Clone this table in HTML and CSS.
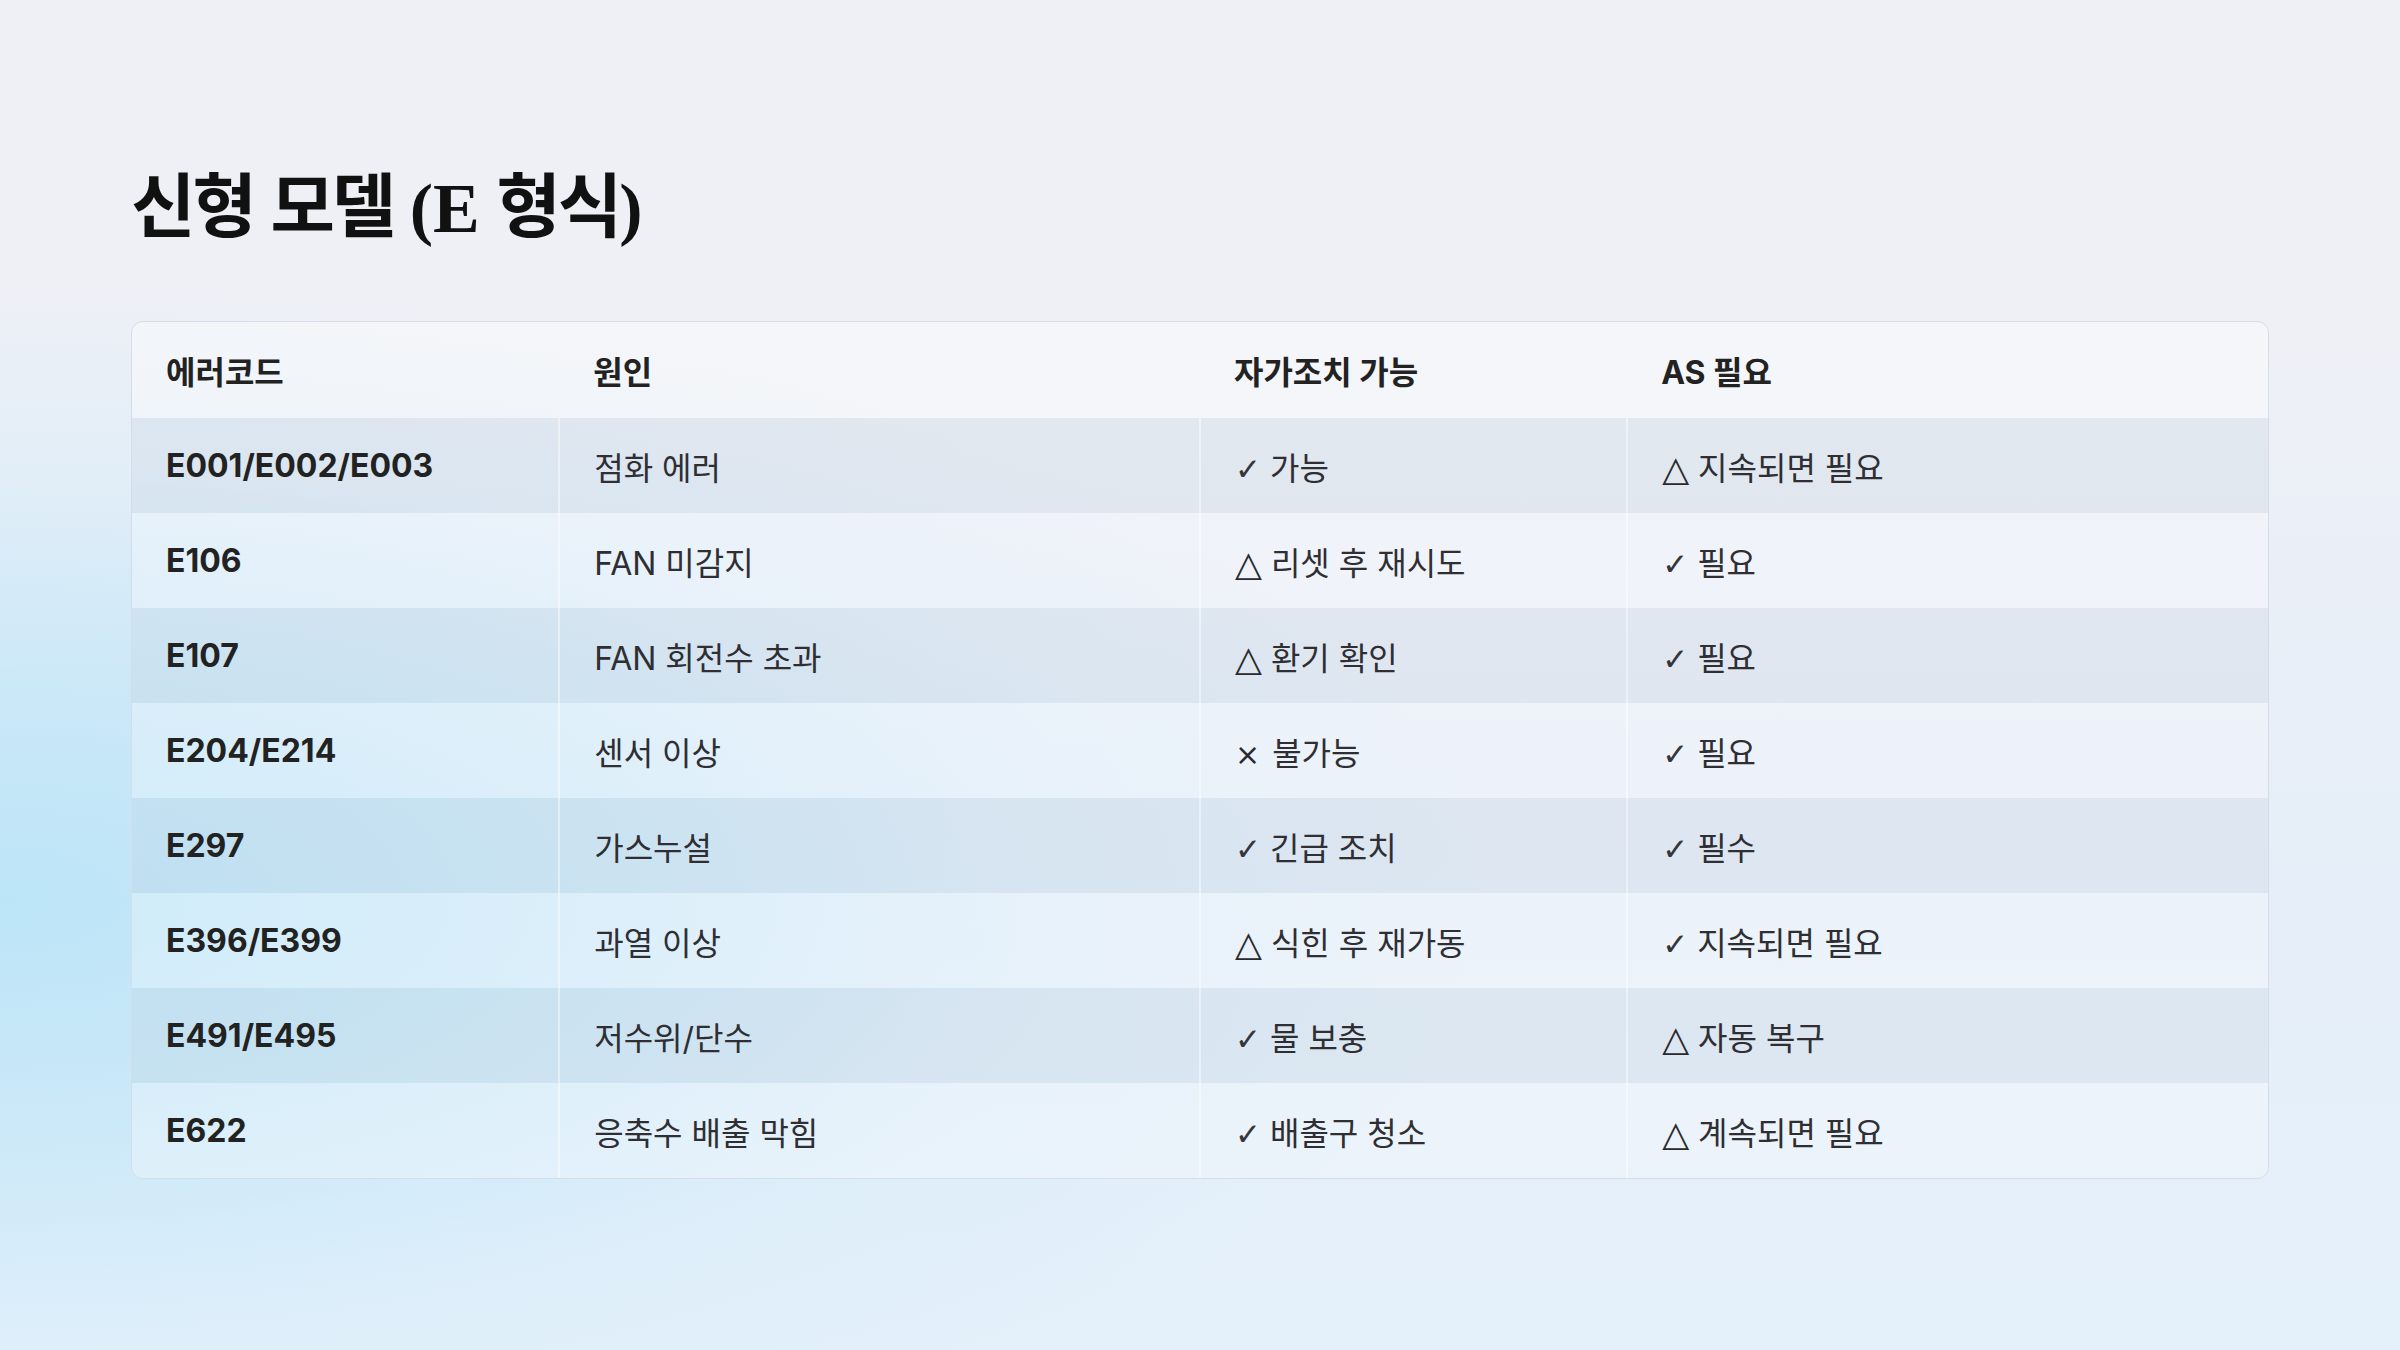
FILE: index.html
```html
<!DOCTYPE html>
<html lang="ko">
<head>
<meta charset="utf-8">
<title>신형 모델 (E 형식)</title>
<link rel="stylesheet" href="styles.css">
</head>
<body>
<main class="slide">
  <h1 class="title">신형 모델 <span class="serif">(E</span> 형식<span class="serif">)</span></h1>
  <div class="table-wrap">
    <table class="codes">
      <colgroup>
        <col class="c-narrow"><col class="c-wide"><col class="c-narrow"><col class="c-wide">
      </colgroup>
      <thead>
        <tr><th>에러코드</th><th>원인</th><th>자가조치 가능</th><th>AS 필요</th></tr>
      </thead>
      <tbody>
        <tr><td class="code">E001/E002/E003</td><td>점화 에러</td><td><span class="mk ck">✓</span>가능</td><td><span class="mk tr">△</span>지속되면 필요</td></tr>
        <tr><td class="code">E106</td><td>FAN 미감지</td><td><span class="mk tr">△</span>리셋 후 재시도</td><td><span class="mk ck">✓</span>필요</td></tr>
        <tr><td class="code">E107</td><td>FAN 회전수 초과</td><td><span class="mk tr">△</span>환기 확인</td><td><span class="mk ck">✓</span>필요</td></tr>
        <tr><td class="code">E204/E214</td><td>센서 이상</td><td><span class="mk xx">×</span>불가능</td><td><span class="mk ck">✓</span>필요</td></tr>
        <tr><td class="code">E297</td><td>가스누설</td><td><span class="mk ck">✓</span>긴급 조치</td><td><span class="mk ck">✓</span>필수</td></tr>
        <tr><td class="code">E396/E399</td><td>과열 이상</td><td><span class="mk tr">△</span>식힌 후 재가동</td><td><span class="mk ck">✓</span>지속되면 필요</td></tr>
        <tr><td class="code">E491/E495</td><td>저수위/단수</td><td><span class="mk ck">✓</span>물 보충</td><td><span class="mk tr">△</span>자동 복구</td></tr>
        <tr><td class="code">E622</td><td>응축수 배출 막힘</td><td><span class="mk ck">✓</span>배출구 청소</td><td><span class="mk tr">△</span>계속되면 필요</td></tr>
      </tbody>
    </table>
  </div>
</main>
</body>
</html>
```

FILE: styles.css
```css
html, body {
  margin: 0;
  padding: 0;
}

body {
  width: 2400px;
  height: 1350px;
  overflow: hidden;
  font-family: Inter, "Noto Sans CJK KR", sans-serif;
  color: #2a2a2e;
  background:
    radial-gradient(ellipse 1500px 620px at 0px 900px, rgba(188, 229, 248, 1) 0%, rgba(194, 230, 248, 0.75) 35%, rgba(205, 234, 250, 0.3) 70%, rgba(210, 235, 250, 0) 100%),
    linear-gradient(180deg, #eff0f5 0%, #eef0f6 25%, #e6eef8 60%, #e4f0fa 100%);
}

.slide {
  padding: 152px 132px 0 131px;
}

.title {
  margin: 0 0 62px 0;
  font-family: "Noto Sans CJK KR", sans-serif;
  font-weight: 700;
  font-size: 70px;
  line-height: 100px;
  letter-spacing: -3px;
  color: #111;
}

.title .serif {
  font-family: "Liberation Serif", "DejaVu Serif", serif;
  font-weight: 700;
  letter-spacing: 0;
}

.table-wrap {
  width: 2136px;
  border: 1px solid #d6dde6;
  border-radius: 12px;
  overflow: hidden;
  background: rgba(255, 255, 255, 0.14);
}

.codes {
  width: 100%;
  border-collapse: collapse;
  table-layout: fixed;
}

.c-narrow { width: 20%; }
.c-wide { width: 30%; }

.codes th,
.codes td {
  text-align: left;
  padding: 0 0 0 34px;
  font-size: 32px;
  white-space: nowrap;
}

.codes th {
  height: 96px;
  font-weight: 700;
  color: #222;
  background: rgba(255, 255, 255, 0.3);
}

.codes td {
  height: 95px;
  font-weight: 400;
  color: #2e2e33;
  border-right: 2px solid rgba(255, 255, 255, 0.45);
}

.codes td:last-child {
  border-right: none;
}

.codes tbody tr:nth-child(odd) td {
  background: rgba(120, 145, 175, 0.1);
}

.codes tbody tr:nth-child(even) td {
  background: rgba(255, 255, 255, 0.18);
}

.codes td.code {
  font-weight: 700;
  color: #222;
}

.mk {
  display: inline-block;
  font-family: "DejaVu Sans", sans-serif;
  line-height: 1;
  color: #2a2a2e;
  vertical-align: 0;
}

.mk.ck {
  font-size: 31px;
  margin-right: 9px;
  color: #35353a;
}

.mk.tr {
  font-size: 35px;
  margin-right: 9px;
  vertical-align: -1px;
}

.mk.xx {
  font-size: 30px;
  margin-right: 12px;
}
```
